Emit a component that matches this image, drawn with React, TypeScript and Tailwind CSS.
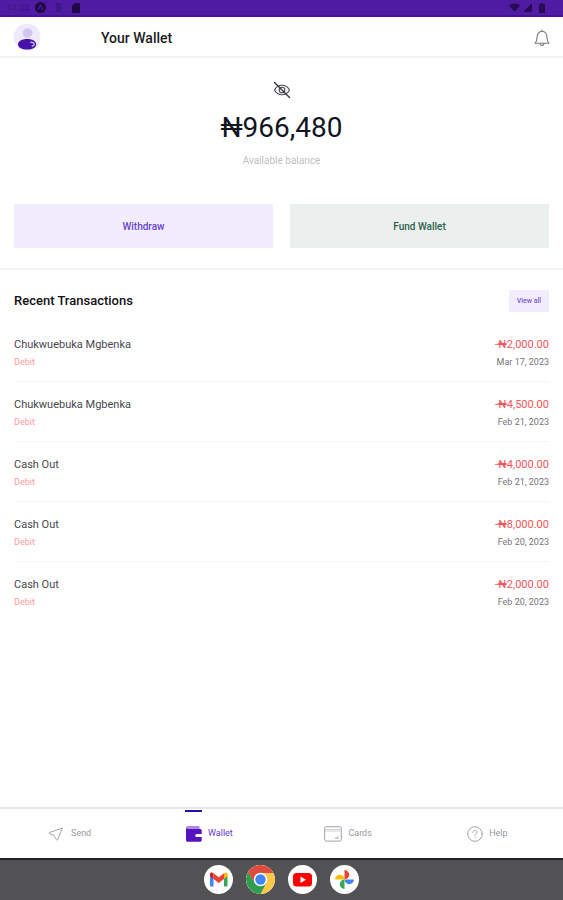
import type { ReactNode } from 'react'
import clsx from 'clsx'

type Transaction = {
  id: number
  name: string
  type: string
  amount: string
  date: string
}

const transactions: Transaction[] = [
  { id: 1, name: 'Chukwuebuka Mgbenka', type: 'Debit', amount: '-₦2,000.00', date: 'Mar 17, 2023' },
  { id: 2, name: 'Chukwuebuka Mgbenka', type: 'Debit', amount: '-₦4,500.00', date: 'Feb 21, 2023' },
  { id: 3, name: 'Cash Out', type: 'Debit', amount: '-₦4,000.00', date: 'Feb 21, 2023' },
  { id: 4, name: 'Cash Out', type: 'Debit', amount: '-₦8,000.00', date: 'Feb 20, 2023' },
  { id: 5, name: 'Cash Out', type: 'Debit', amount: '-₦2,000.00', date: 'Feb 20, 2023' },
]

function StatusBar() {
  return (
    <div className="flex h-[17px] items-center justify-between border-b-2 border-[#44129a] bg-[#4f1ba3] pr-[18px] pl-[7px] text-[#2a0f5c]">
      <div className="flex items-center gap-2">
        <span className="w-5 text-[9px] leading-4 text-[#3a1580]">11:23</span>
        <svg className="size-[11px] text-[#1f0a45]" viewBox="0 0 12 12">
          <circle cx="6" cy="6" r="6" fill="currentColor" />
          <path d="M3.5 8.5 6 3.5l2.500 5" fill="none" stroke="#4f1ba3" strokeWidth="1.2" />
        </svg>
        <svg className="size-[9px]" viewBox="0 0 10 10" fill="none" stroke="#3a1580" strokeWidth="1.3">
          <path d="M2 1h6M2 9h6M2.5 3h5v4h-5zM2.5 5h5" />
        </svg>
        <svg className="size-[10px]" viewBox="0 0 10 10">
          <path d="M4 0h5v10H1V3z" fill="#1f0a45" />
        </svg>
      </div>
      <div className="flex items-center gap-[3px] text-[#260c52]">
        <svg className="h-[9px] w-[11px]" viewBox="0 0 12 9" fill="currentColor">
          <path d="M6 9 0 2.200C3.400-.7 8.600-.7 12 2.200z" />
        </svg>
        <svg className="size-[9px]" viewBox="0 0 10 10" fill="currentColor">
          <path d="M10 0v10H0z" />
        </svg>
        <svg className="ml-1 h-[10px] w-[6px]" viewBox="0 0 6 10" fill="currentColor">
          <path d="M2 0h2v1h2v9H0V1h2z" />
        </svg>
      </div>
    </div>
  )
}

function Header() {
  return (
    <header className="flex h-[41px] items-center border-b-2 border-[#f2f2f3] pt-0.5 pr-3 pl-[13px]">
      <button type="button" aria-label="Profile">
        <svg className="size-7" viewBox="0 0 28 28">
          <circle cx="14" cy="13" r="13.500" fill="#efeafb" />
          <circle cx="14.500" cy="9" r="4.800" fill="#d3c5f1" />
          <path d="M5 20.500c0-3.400 4-5.500 9.200-5.500s9 2.100 9 5.500c0 3-4 5-9 5s-9.200-2-9.200-5z" fill="#4511a8" />
          <path d="M17.500 18.500c1.800-.7 3.700.3 3.700 1.700 0 1.500-1.400 2.100-2.500 1.500" fill="none" stroke="#c9b8ef" strokeWidth="1.400" />
        </svg>
      </button>
      <h1 className="ml-[60px] flex-1 text-[14px] leading-5 font-medium text-[#1c1c1e]">Your Wallet</h1>
      <button type="button" aria-label="Notifications">
        <svg className="size-[18px]" viewBox="0 0 18 18" fill="none" stroke="#77777c" strokeWidth="1.100" strokeLinecap="round" strokeLinejoin="round">
          <path d="M9 .8V2M2 14.200h14c-1.500-1.300-2-2.500-2-5.200 0-4-1.800-6.800-5-6.800S4 5 4 9c0 2.700-.5 3.900-2 5.200z" />
          <path d="M7 14.500c.1 1.300.9 2 2 2s1.900-.7 2-2" />
        </svg>
      </button>
    </header>
  )
}

function Balance() {
  return (
    <section className="border-b-2 border-[#f2f2f3] px-3.5 pt-[23px] pb-5">
      <div className="flex flex-col items-center">
        <button type="button" aria-label="Hide balance">
          <svg className="size-[18px]" viewBox="0 0 18 18" fill="none" stroke="#454950" strokeWidth="1.100" strokeLinecap="round">
            <path d="M1.500 9C3 6 5.700 4.200 9 4.200S15 6 16.500 9c-1.500 3-4.200 4.800-7.500 4.800S3 12 1.500 9z" />
            <circle cx="9" cy="9" r="2.800" />
            <path d="m1.500 1.500 15 15" stroke="#30343b" strokeWidth="1.400" />
          </svg>
        </button>
        <p className="mt-[11px] text-[28px] leading-9 text-[#11151f]">₦966,480</p>
        <p className="mt-[7px] text-[10px] leading-4 text-[#c0c0c4]">Available balance</p>
      </div>
      <div className="mt-[35px] grid grid-cols-2 gap-[17px]">
        <button type="button" className="h-11 bg-[#f2edfc] text-[10px] font-medium text-[#6a43d3]">
          Withdraw
        </button>
        <button type="button" className="h-11 bg-[#ebf0ee] text-[10px] font-medium text-[#2c604c]">
          Fund Wallet
        </button>
      </div>
    </section>
  )
}

function TransactionRow({ transaction }: { transaction: Transaction }) {
  return (
    <li className="flex justify-between border-b border-[#f5f5f6] pt-3.5 pb-[11px] last:border-b-0">
      <div>
        <p className="text-[11px] leading-[18px] text-[#47474c]">{transaction.name}</p>
        <p className="text-[9px] leading-4 text-[#ff999d]">{transaction.type}</p>
      </div>
      <div className="text-right">
        <p className="text-[11px] leading-[18px] text-[#f25557]">{transaction.amount}</p>
        <p className="text-[9px] leading-4 text-[#737379]">{transaction.date}</p>
      </div>
    </li>
  )
}

function NavItem({ label, active, children }: { label: string; active?: boolean; children: ReactNode }) {
  return (
    <a
      href="#"
      className={clsx(
        'flex h-full items-center justify-center gap-1.5 text-[9px]',
        active ? 'text-[#6a38cf]' : 'text-[#98989e]'
      )}
    >
      <span className="relative flex h-full items-center">
        {active && <span className="absolute inset-x-0 top-px h-0.5 bg-[#2a10a8]" />}
        {children}
      </span>
      {label}
    </a>
  )
}

function BottomNav() {
  return (
    <nav className="grid h-[51px] grid-cols-4 border-t-2 border-[#e9e9eb] pr-1.5">
      <NavItem label="Send">
        <svg className="h-4 w-[17px]" viewBox="0 0 17 16" fill="none" stroke="#a4a4a9" strokeLinejoin="round">
          <path d="M14.500 2 1.500 6.500c-.6.300-.6.900 0 1.200L6 9.500l2.500 4.300c.4.600 1 .5 1.200-.1z" />
        </svg>
      </NavItem>
      <NavItem label="Wallet" active>
        <svg className="h-4 w-[17px]" viewBox="0 0 17 16">
          <path d="M2.500 0H13c1 0 1.700.7 1.700 1.500v2H1V1.500C1 .7 1.600 0 2.500 0z" fill="#a98be3" />
          <path d="M1 1.500c0 .9.800 1.400 1.700 1.400H15c1 0 1.700.7 1.700 1.600v9.700c0 .9-.7 1.500-1.700 1.500H2.700c-1 0-1.700-.6-1.700-1.500z" fill="#5512bd" />
          <path d="M17 7.900h-5c-2.300 0-2.300 3.200 0 3.200h5z" fill="#fff" />
        </svg>
      </NavItem>
      <NavItem label="Cards">
        <svg className="h-4 w-[18px]" viewBox="0 0 18 16" fill="none" stroke="#a2a2aa">
          <rect x=".7" y=".7" width="16.600" height="14.400" rx="1.500" />
          <path d="M1 3.500h16M1 5h16" stroke="#d2d2d7" />
          <path d="M11 12.300h3.500M13 11h1.500" />
        </svg>
      </NavItem>
      <NavItem label="Help">
        <svg className="size-4" viewBox="0 0 16 16" fill="none" stroke="#a2a2a7" strokeLinecap="round">
          <circle cx="8" cy="8" r="7.300" />
          <path d="M6 6.300c.1-1.200.9-1.900 2-1.900s2 .7 2 1.800c0 1.400-2 1.500-2 3M8 11.400v.2" />
        </svg>
      </NavItem>
    </nav>
  )
}

function AppButton({ label, children }: { label: string; children: ReactNode }) {
  return (
    <button type="button" aria-label={label} className="size-[29px] overflow-hidden rounded-full bg-white">
      {children}
    </button>
  )
}

function Taskbar() {
  return (
    <footer className="flex h-[42px] items-center justify-center gap-[13px] border-t-2 border-[#202022] bg-[#525254] pb-0.5">
      <AppButton label="Gmail">
        <svg viewBox="0 0 29 29">
          <path d="M6 10v10.500c0 .6.400 1 1 1h2.500V13z" fill="#4285f4" />
          <path d="M23.500 10v10.500c0 .6-.4 1-1 1H20V13z" fill="#34a853" />
          <path d="M20 9.200V14l3.500-2.700V9.500c0-2-2-2.500-3.500-1.300z" fill="#fbbc04" />
          <path d="M9.500 9.200V14L6 11.300V9.500c0-2 2-2.500 3.500-1.300z" fill="#c5221f" />
          <path d="M9.500 14V8.200l5.200 4 5.300-4V14l-5.300 4z" fill="#ea4335" />
        </svg>
      </AppButton>
      <AppButton label="Chrome">
        <svg viewBox="0 0 29 29">
          <circle cx="14.500" cy="14.500" r="14.500" fill="#fbc84a" />
          <path d="M1.900 7.300 8.900 18 14.500 8h12.900A14.500 14.500 0 0 0 1.900 7.300z" fill="#dd4b3e" />
          <path d="M1.900 7.300 8.900 18l4 3 7.300-3L14.500 29A14.500 14.500 0 0 1 1.900 7.300z" fill="#2f9e53" />
          <circle cx="14.500" cy="14.500" r="6.700" fill="#fff" />
          <circle cx="14.500" cy="14.500" r="5.200" fill="#4285f4" />
        </svg>
      </AppButton>
      <AppButton label="YouTube">
        <svg viewBox="0 0 29 29">
          <rect x="5" y="8" width="19" height="13.500" rx="3.500" fill="#f00" />
          <path d="M12.500 11.500v6.500l5.500-3.200z" fill="#fff" />
        </svg>
      </AppButton>
      <AppButton label="Photos">
        <svg viewBox="0 0 29 29">
          <path d="M14.500 5a4.700 4.700 0 0 1 0 9.500z" fill="#ea4335" />
          <path d="M24 14.500a4.700 4.700 0 0 1-9.500 0z" fill="#4285f4" />
          <path d="M14.500 24a4.700 4.700 0 0 1 0-9.500z" fill="#34a853" />
          <path d="M5 14.500a4.700 4.700 0 0 1 9.500 0z" fill="#fbbc04" />
        </svg>
      </AppButton>
    </footer>
  )
}

export default function App() {
  return (
    <div className="flex min-h-screen flex-col bg-white font-['Roboto',sans-serif]">
      <StatusBar />
      <Header />
      <main className="flex-1">
        <Balance />
        <section className="px-3.5 pt-5">
          <div className="flex items-center justify-between">
            <h2 className="text-[13px] leading-5 font-medium text-[#111113]">Recent Transactions</h2>
            <button type="button" className="h-[22px] bg-[#f2edfc] px-2 text-[7px] font-medium text-[#7d56dd]">
              View all
            </button>
          </div>
          <ul className="mt-2.5">
            {transactions.map((t) => (
              <TransactionRow key={t.id} transaction={t} />
            ))}
          </ul>
        </section>
      </main>
      <BottomNav />
      <Taskbar />
    </div>
  )
}
